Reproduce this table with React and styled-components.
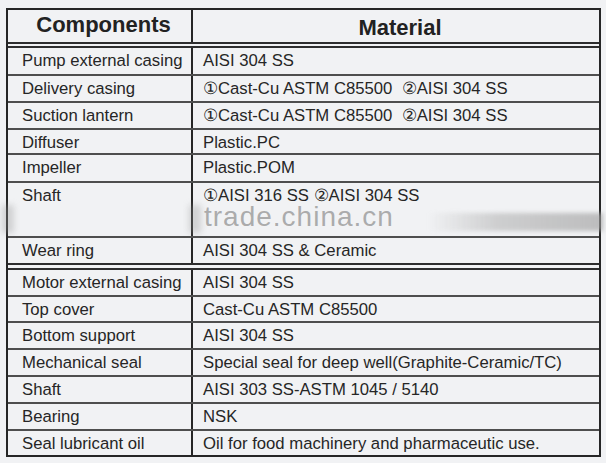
import React from 'react'
import styled, { createGlobalStyle } from 'styled-components'

const GlobalStyle = createGlobalStyle`
  html, body {
    margin: 0;
    padding: 0;
    background: #f1f2f4;
  }
  body {
    font-family: "Liberation Sans", Arial, sans-serif;
    color: #262626;
  }
`

const rows = [
  { part: 'Pump external casing', material: 'AISI 304 SS', h: 28 },
  { part: 'Delivery casing', material: '\u2460Cast-Cu ASTM C85500  \u2461AISI 304 SS', h: 27 },
  { part: 'Suction lantern', material: '\u2460Cast-Cu ASTM C85500  \u2461AISI 304 SS', h: 27 },
  { part: 'Diffuser', material: 'Plastic.PC', h: 25 },
  { part: 'Impeller', material: 'Plastic.POM', h: 28 },
  { part: 'Shaft', material: '\u2460AISI 316 SS \u2461AISI 304 SS', h: 55, mark: true },
  { part: 'Wear ring', material: 'AISI 304 SS & Ceramic', h: 32, split: true },
  { part: 'Motor external casing', material: 'AISI 304 SS', h: 27 },
  { part: 'Top cover', material: 'Cast-Cu ASTM C85500', h: 26 },
  { part: 'Bottom support', material: 'AISI 304 SS', h: 27 },
  { part: 'Mechanical seal', material: 'Special seal for deep well(Graphite-Ceramic/TC)', h: 27 },
  { part: 'Shaft', material: 'AISI 303 SS-ASTM 1045 / 5140', h: 27 },
  { part: 'Bearing', material: 'NSK', h: 27 },
  { part: 'Seal lubricant oil', material: 'Oil for food machinery and pharmaceutic use.', h: 24, last: true },
]

function App() {
  return (
    <Page>
      <GlobalStyle />
      <Table>
        <HeadRow>
          <HeadCell $first>Components</HeadCell>
          <HeadCell $drop={3}>Material</HeadCell>
        </HeadRow>
        {rows.map((r, i) => (
          <Row key={i} $h={r.h} $split={r.split} $last={r.last}>
            <PartCell>{r.part}</PartCell>
            <MaterialCell>{r.material}</MaterialCell>
            {r.mark && (
              <>
                <Watermark>trade.china.cn</Watermark>
                <Smudge />
                <Blob $x={-6} />
                <Blob $x={181} />
              </>
            )}
          </Row>
        ))}
      </Table>
    </Page>
  )
}

export default App

const Page = styled.div`
  padding: 8px 5px 6px 6px;
`

const Table = styled.div`
  width: 595px;
  box-sizing: border-box;
  border: 2px solid #262626;
  display: flex;
  flex-direction: column;
`

const HeadRow = styled.div`
  display: grid;
  grid-template-columns: 185px 1fr;
  height: 38px;
  box-sizing: border-box;
  border-bottom: 6px double #2e2e2e;
`

const HeadCell = styled.div`
  box-sizing: border-box;
  padding: ${p => 2 + (p.$drop || 0)}px 0 0 8px;
  text-align: center;
  font-size: 22px;
  line-height: 26px;
  font-weight: bold;
  color: #222;
  border-right: ${p => (p.$first ? '2px solid #262626' : 'none')};
`

const Row = styled.div`
  position: relative;
  display: grid;
  grid-template-columns: 185px 1fr;
  height: ${p => p.$h}px;
  box-sizing: border-box;
  border-bottom: ${p =>
    p.$last ? 'none' : p.$split ? '7px double #2e2e2e' : '2px solid #4e4e4e'};
`

const PartCell = styled.div`
  box-sizing: border-box;
  padding: 3px 0 0 14px;
  font-size: 16.7px;
  line-height: 20px;
  white-space: nowrap;
  border-right: 2px solid #262626;
`

const MaterialCell = styled.div`
  box-sizing: border-box;
  padding: 3px 0 0 10px;
  font-size: 16.7px;
  line-height: 20px;
  white-space: pre;
`

const Watermark = styled.div`
  position: absolute;
  left: 196px;
  top: 19px;
  font-size: 28px;
  line-height: 30px;
  letter-spacing: 1px;
  color: rgba(140, 140, 140, 0.7);
  pointer-events: none;
`

const Smudge = styled.div`
  position: absolute;
  left: 420px;
  right: -4px;
  top: 30px;
  height: 18px;
  background: linear-gradient(to right, rgba(170, 170, 170, 0), rgba(170, 170, 170, 0.5) 40%, rgba(160, 160, 160, 0.65));
  filter: blur(2px);
  pointer-events: none;
`

const Blob = styled.div`
  position: absolute;
  left: ${p => p.$x}px;
  top: 22px;
  width: 12px;
  height: 28px;
  background: rgba(150, 150, 150, 0.35);
  filter: blur(3px);
  pointer-events: none;
`
